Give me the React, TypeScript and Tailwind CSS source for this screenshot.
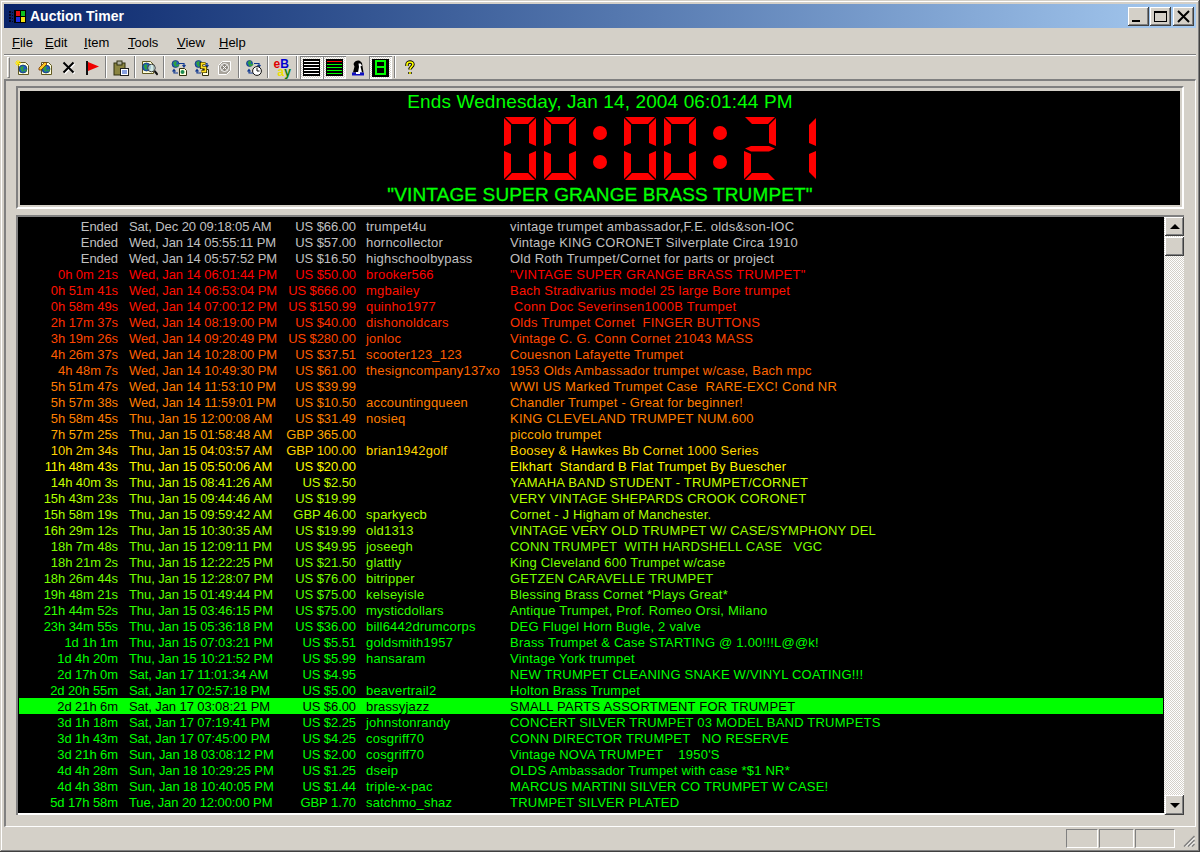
import type { ReactNode } from 'react'

const rows = [
  ['Ended', 'Sat, Dec 20 09:18:05 AM', 'US $66.00', 'trumpet4u', 'vintage trumpet ambassador,F.E. olds&son-IOC'],
  ['Ended', 'Wed, Jan 14 05:55:11 PM', 'US $57.00', 'horncollector', 'Vintage KING CORONET Silverplate Circa 1910'],
  ['Ended', 'Wed, Jan 14 05:57:52 PM', 'US $16.50', 'highschoolbypass', 'Old Roth Trumpet/Cornet for parts or project'],
  ['0h 0m 21s', 'Wed, Jan 14 06:01:44 PM', 'US $50.00', 'brooker566', '"VINTAGE SUPER GRANGE BRASS TRUMPET"'],
  ['0h 51m 41s', 'Wed, Jan 14 06:53:04 PM', 'US $666.00', 'mgbailey', 'Bach Stradivarius model 25 large Bore trumpet'],
  ['0h 58m 49s', 'Wed, Jan 14 07:00:12 PM', 'US $150.99', 'quinho1977', ' Conn Doc Severinsen1000B Trumpet'],
  ['2h 17m 37s', 'Wed, Jan 14 08:19:00 PM', 'US $40.00', 'dishonoldcars', 'Olds Trumpet Cornet  FINGER BUTTONS'],
  ['3h 19m 26s', 'Wed, Jan 14 09:20:49 PM', 'US $280.00', 'jonloc', 'Vintage C. G. Conn Cornet 21043 MASS'],
  ['4h 26m 37s', 'Wed, Jan 14 10:28:00 PM', 'US $37.51', 'scooter123_123', 'Couesnon Lafayette Trumpet'],
  ['4h 48m 7s', 'Wed, Jan 14 10:49:30 PM', 'US $61.00', 'thesigncompany137xo', '1953 Olds Ambassador trumpet w/case, Bach mpc'],
  ['5h 51m 47s', 'Wed, Jan 14 11:53:10 PM', 'US $39.99', '', 'WWI US Marked Trumpet Case  RARE-EXC! Cond NR'],
  ['5h 57m 38s', 'Wed, Jan 14 11:59:01 PM', 'US $10.50', 'accountingqueen', 'Chandler Trumpet - Great for beginner!'],
  ['5h 58m 45s', 'Thu, Jan 15 12:00:08 AM', 'US $31.49', 'nosieq', 'KING CLEVELAND TRUMPET NUM.600'],
  ['7h 57m 25s', 'Thu, Jan 15 01:58:48 AM', 'GBP 365.00', '', 'piccolo trumpet'],
  ['10h 2m 34s', 'Thu, Jan 15 04:03:57 AM', 'GBP 100.00', 'brian1942golf', 'Boosey & Hawkes Bb Cornet 1000 Series'],
  ['11h 48m 43s', 'Thu, Jan 15 05:50:06 AM', 'US $20.00', '', 'Elkhart  Standard B Flat Trumpet By Buescher'],
  ['14h 40m 3s', 'Thu, Jan 15 08:41:26 AM', 'US $2.50', '', 'YAMAHA BAND STUDENT - TRUMPET/CORNET'],
  ['15h 43m 23s', 'Thu, Jan 15 09:44:46 AM', 'US $19.99', '', 'VERY VINTAGE SHEPARDS CROOK CORONET'],
  ['15h 58m 19s', 'Thu, Jan 15 09:59:42 AM', 'GBP 46.00', 'sparkyecb', 'Cornet - J Higham of Manchester.'],
  ['16h 29m 12s', 'Thu, Jan 15 10:30:35 AM', 'US $19.99', 'old1313', 'VINTAGE VERY OLD TRUMPET W/ CASE/SYMPHONY DEL'],
  ['18h 7m 48s', 'Thu, Jan 15 12:09:11 PM', 'US $49.95', 'joseegh', 'CONN TRUMPET  WITH HARDSHELL CASE   VGC'],
  ['18h 21m 2s', 'Thu, Jan 15 12:22:25 PM', 'US $21.50', 'glattly', 'King Cleveland 600 Trumpet w/case'],
  ['18h 26m 44s', 'Thu, Jan 15 12:28:07 PM', 'US $76.00', 'bitripper', 'GETZEN CARAVELLE TRUMPET'],
  ['19h 48m 21s', 'Thu, Jan 15 01:49:44 PM', 'US $75.00', 'kelseyisle', 'Blessing Brass Cornet *Plays Great*'],
  ['21h 44m 52s', 'Thu, Jan 15 03:46:15 PM', 'US $75.00', 'mysticdollars', 'Antique Trumpet, Prof. Romeo Orsi, Milano'],
  ['23h 34m 55s', 'Thu, Jan 15 05:36:18 PM', 'US $36.00', 'bill6442drumcorps', 'DEG Flugel Horn Bugle, 2 valve'],
  ['1d 1h 1m', 'Thu, Jan 15 07:03:21 PM', 'US $5.51', 'goldsmith1957', 'Brass Trumpet & Case STARTING @ 1.00!!!L@@k!'],
  ['1d 4h 20m', 'Thu, Jan 15 10:21:52 PM', 'US $5.99', 'hansaram', 'Vintage York trumpet'],
  ['2d 17h 0m', 'Sat, Jan 17 11:01:34 AM', 'US $4.95', '', 'NEW TRUMPET CLEANING SNAKE W/VINYL COATING!!!'],
  ['2d 20h 55m', 'Sat, Jan 17 02:57:18 PM', 'US $5.00', 'beavertrail2', 'Holton Brass Trumpet'],
  ['2d 21h 6m', 'Sat, Jan 17 03:08:21 PM', 'US $6.00', 'brassyjazz', 'SMALL PARTS ASSORTMENT FOR TRUMPET'],
  ['3d 1h 18m', 'Sat, Jan 17 07:19:41 PM', 'US $2.25', 'johnstonrandy', 'CONCERT SILVER TRUMPET 03 MODEL BAND TRUMPETS'],
  ['3d 1h 43m', 'Sat, Jan 17 07:45:00 PM', 'US $4.25', 'cosgriff70', 'CONN DIRECTOR TRUMPET   NO RESERVE'],
  ['3d 21h 6m', 'Sun, Jan 18 03:08:12 PM', 'US $2.00', 'cosgriff70', "Vintage NOVA TRUMPET    1950'S"],
  ['4d 4h 28m', 'Sun, Jan 18 10:29:25 PM', 'US $1.25', 'dseip', 'OLDS Ambassador Trumpet with case *$1 NR*'],
  ['4d 4h 38m', 'Sun, Jan 18 10:40:05 PM', 'US $1.44', 'triple-x-pac', 'MARCUS MARTINI SILVER CO TRUMPET W CASE!'],
  ['5d 17h 58m', 'Tue, Jan 20 12:00:00 PM', 'GBP 1.70', 'satchmo_shaz', 'TRUMPET SILVER PLATED'],
]

// red -> yellow -> green over the last 24 hours
function rowColor(left: string) {
  if (left === 'Ended') return '#c0c0c0'
  const d = left.match(/(\d+)d/)
  const h = left.match(/(\d+)h/)
  const m = left.match(/(\d+)m/)
  const hours = (d ? +d[1] * 24 : 0) + (h ? +h[1] : 0) + (m ? +m[1] / 60 : 0)
  if (hours >= 24) return '#00ff00'
  if (hours < 12) return `rgb(255,${Math.round((hours / 12) * 255)},0)`
  return `rgb(${Math.round(((24 - hours) / 12) * 255)},255,0)`
}

const raised =
  'bg-[#d4d0c8] shadow-[inset_-1px_-1px_#404040,inset_1px_1px_#ffffff,inset_-2px_-2px_#808080,inset_2px_2px_#d4d0c8]'
const dither =
  'bg-[repeating-conic-gradient(#d4d0c8_0_25%,#ffffff_0_50%)] bg-[length:2px_2px]'

function Icon({ children }: { children: ReactNode }) {
  return (
    <svg width="16" height="16" viewBox="0 0 16 16" className="block">
      {children}
    </svg>
  )
}

function Page() {
  return <path d="M3.5 2.5h7l3 3v9h-10z" fill="#ffffdd" stroke="#605820" />
}

function Globe({ x = 8, y = 9, r = 4 }: { x?: number; y?: number; r?: number }) {
  return (
    <g>
      <circle cx={x} cy={y} r={r} fill="#1c5cc0" stroke="#103068" strokeWidth="0.7" />
      <path
        d={`M${x - r + 1} ${y - 1}l2 -2 2 1 -1 2 1 2 -2 1z M${x + 1} ${y + 1}l2 -1 1 1 -2 2z`}
        fill="#30a040"
      />
    </g>
  )
}

function NewIcon() {
  return (
    <Icon>
      <Page />
      <Globe />
      <path d="M3 0v6M0 3h6M1 1l4 4M5 1l-4 4" stroke="#ffe800" strokeWidth="1" />
    </Icon>
  )
}

function EditIcon() {
  return (
    <Icon>
      <Page />
      <Globe />
      <path d="M1 8l6-6 2 2-6 6H1z" fill="#f8c820" stroke="#7a3000" strokeWidth="0.8" />
    </Icon>
  )
}

function DeleteIcon() {
  return (
    <Icon>
      <path d="M3.5 3.5l10 10M13.5 3.5l-10 10" stroke="#ffffff" strokeWidth="2" />
      <path d="M2.5 2.5l10 10M12.5 2.5l-10 10" stroke="#000000" strokeWidth="2" />
    </Icon>
  )
}

function FlagIcon() {
  return (
    <Icon>
      <rect x="2" y="1" width="2" height="14" fill="#101010" />
      <path d="M4 2l11 4.500-11 4.500z" fill="#f00000" />
    </Icon>
  )
}

function ClipboardIcon() {
  return (
    <Icon>
      <rect x="1" y="3" width="11" height="12" fill="#8a8440" stroke="#303010" />
      <rect x="4" y="1" width="5" height="4" fill="#b0b0a0" stroke="#303010" />
      <rect x="7.5" y="8.5" width="8" height="7" fill="#ffffff" stroke="#202020" />
      <path d="M9 11h5M9 13h5" stroke="#1040c0" />
    </Icon>
  )
}

function FindIcon() {
  return (
    <Icon>
      <path d="M0.500 1.500h8l3 3v9h-11z" fill="#ffffdd" stroke="#605820" />
      <Globe x={4.500} y={7} />
      <circle cx="9.500" cy="8" r="3.800" fill="#c0e0e8" fillOpacity="0.75" stroke="#404040" />
      <path d="M12.500 11l3.200 3.800" stroke="#101010" strokeWidth="2" />
    </Icon>
  )
}

function Arrows() {
  return (
    <path
      d="M8 3.5h5v3M11.5 5l1.5 2 1.5-2M7 13H3v-3M1.5 11.5L3 9.5l1.5 2"
      fill="none"
      stroke="#103890"
      strokeWidth="1.2"
    />
  )
}

function RefreshIcon() {
  return (
    <Icon>
      <Globe x={4.5} y={4} r={3.5} />
      <Arrows />
      <path d="M8.5 8.5h5l2 2v5h-7z" fill="#ffffdd" stroke="#303010" />
      <circle cx="11.5" cy="12" r="2" fill="#1c8c50" />
    </Icon>
  )
}

function RefreshAllIcon() {
  return (
    <Icon>
      <Globe x={4.5} y={4} r={3.5} />
      <Arrows />
      <path d="M8.5 9.5h6v6h-6z" fill="#ffffdd" stroke="#303010" />
      <path d="M11.5 3.5H7.5v4h4v4h-4" fill="none" stroke="#000000" strokeWidth="3.2" />
      <path d="M11.5 3.5H7.5v4h4v4h-4" fill="none" stroke="#ffe020" strokeWidth="1.8" />
    </Icon>
  )
}

function StopIcon() {
  return (
    <Icon>
      <path d="M1.500 5.500l4-4h8v9l-4 4h-8z" fill="#a8a49c" stroke="#ffffff" />
      <circle cx="7.500" cy="7.500" r="4" fill="#8c8880" stroke="#ffffff" />
      <path d="M5.500 5.500l4 4M9.500 5.500l-4 4" stroke="#ffffff" />
    </Icon>
  )
}

function ClockIcon() {
  return (
    <Icon>
      <Globe x={3.5} y={3.5} r={3} />
      <Arrows />
      <circle cx="11" cy="11" r="4.4" fill="#ffffff" stroke="#101010" />
      <path d="M11 8v3h2.5" fill="none" stroke="#101010" />
    </Icon>
  )
}

function EbayIcon() {
  return (
    <div className="h-[16px] w-[20px] text-[12px] font-bold leading-[8px]">
      <div className="h-[8px] pl-[1px]">
        <span className="text-[#e00000]">e</span>
        <span className="text-[#0000d0]">B</span>
      </div>
      <div className="h-[8px] pl-[5px]">
        <span className="text-[#f0e000]">a</span>
        <span className="text-[#108000]">y</span>
      </div>
    </div>
  )
}

function LinesIcon({ colored }: { colored?: boolean }) {
  const ys = [3, 6, 9, 12, 15]
  return (
    <svg width="17" height="17" viewBox="0 0 17 17" className="block [shape-rendering:crispEdges]">
      <rect width="17" height="17" fill="#000000" />
      {ys.map((y, i) => (
        <rect
          key={y}
          x="1"
          y={y - 1}
          width="15"
          height="1"
          fill={colored ? (i === 0 ? '#ff0000' : '#00ff00') : '#ffffff'}
        />
      ))}
    </svg>
  )
}

function SniperIcon() {
  return (
    <svg width="14" height="16" viewBox="0 0 14 16" className="block">
      <path d="M2 12.500l1.500-6-1-2.500C4 .500 7 0 9 1l2 2 1.500 9.500z" fill="#000000" />
      <path d="M7.500 3.500h2l1.500 2-1.500 1 1.500 6H7L8 7z" fill="#ffffff" />
      <rect x="1" y="12.500" width="12" height="3" fill="#1010c0" />
      <rect x="5" y="12" width="4" height="2" fill="#ffffff" />
    </svg>
  )
}

function LedIcon() {
  return (
    <div className="flex h-[18px] w-[17px] items-center justify-center bg-black">
      <svg width="11" height="15" viewBox="0 0 11 15" className="block [shape-rendering:crispEdges]">
        <path d="M1 1h9v6H1zM1 7h9v7H1z" fill="none" stroke="#00ff00" strokeWidth="2" />
      </svg>
    </div>
  )
}

function HelpIcon() {
  return (
    <Icon>
      <path
        d="M5 6V4.500C5 3 6.500 2 8 2s3 1 3 2.500c0 2-3 2.500-3 5M8 12v2"
        fill="none"
        stroke="#000000"
        strokeWidth="3.400"
      />
      <path
        d="M5 6V4.500C5 3 6.500 2 8 2s3 1 3 2.500c0 2-3 2.500-3 5M8 12v2"
        fill="none"
        stroke="#ffff00"
        strokeWidth="1.600"
      />
    </Icon>
  )
}

function ToolButton({ children, pressed }: { children: ReactNode; pressed?: boolean }) {
  return (
    <div
      className={
        pressed
          ? `flex h-[23px] w-[23px] items-center justify-center ${dither} shadow-[inset_1px_1px_#808080,inset_-1px_-1px_#ffffff]`
          : 'flex h-[23px] w-[23px] items-center justify-center'
      }
    >
      {children}
    </div>
  )
}

function ToolSep() {
  return (
    <div className="flex h-[23px] w-[6px] justify-center">
      <div className="h-[22px] w-[2px] border-l border-r border-l-[#808080] border-r-white" />
    </div>
  )
}

function Toolbar() {
  return (
    <div className="flex h-[23px] items-center pl-[3px]">
      <div className="mr-[1px] h-[21px] w-[3px] border border-t-white border-l-white border-r-[#808080] border-b-[#808080]" />
      <ToolButton><NewIcon /></ToolButton>
      <ToolButton><EditIcon /></ToolButton>
      <ToolButton><DeleteIcon /></ToolButton>
      <ToolButton><FlagIcon /></ToolButton>
      <ToolSep />
      <ToolButton><ClipboardIcon /></ToolButton>
      <ToolSep />
      <ToolButton><FindIcon /></ToolButton>
      <ToolSep />
      <ToolButton><RefreshIcon /></ToolButton>
      <ToolButton><RefreshAllIcon /></ToolButton>
      <ToolButton><StopIcon /></ToolButton>
      <ToolSep />
      <ToolButton><ClockIcon /></ToolButton>
      <ToolSep />
      <ToolButton><EbayIcon /></ToolButton>
      <ToolSep />
      <ToolButton pressed><LinesIcon /></ToolButton>
      <ToolButton pressed><LinesIcon colored /></ToolButton>
      <ToolButton><SniperIcon /></ToolButton>
      <ToolButton pressed><LedIcon /></ToolButton>
      <ToolSep />
      <ToolButton><HelpIcon /></ToolButton>
    </div>
  )
}

function WindowsLogo() {
  return (
    <svg width="18" height="15" viewBox="0 0 18 15" className="block [shape-rendering:crispEdges]">
      <path d="M0 2h2v2H0zM0 5h2v2H0zM0 8h2v2H0zM0 11h2v2H0zM3 3h1v1H3zM3 6h1v1H3zM3 9h1v1H3zM3 12h1v1H3z" fill="#050520" />
      <path d="M5 1h12v13H5z" fill="#000000" />
      <rect x="7" y="2" width="4" height="5" fill="#e01010" />
      <rect x="12" y="2" width="4" height="5" fill="#10c020" />
      <rect x="7" y="8" width="4" height="5" fill="#2030e0" />
      <rect x="12" y="8" width="4" height="5" fill="#f0e010" />
    </svg>
  )
}

function CaptionButton({ children, className }: { children: ReactNode; className?: string }) {
  return (
    <div className={`flex h-[19px] w-[21px] items-center justify-center ${raised} ${className ?? ''}`}>
      {children}
    </div>
  )
}

function TitleBar() {
  return (
    <div className="flex h-[24px] items-center bg-gradient-to-r from-[#0a246a] to-[#a6caf0] pl-[5px] pr-[2px]">
      <WindowsLogo />
      <span className="ml-[3px] text-[14px] font-bold leading-none text-white">Auction Timer</span>
      <div className="ml-auto flex items-center">
        <CaptionButton>
          <svg width="21" height="19" viewBox="0 0 21 19" className="[shape-rendering:crispEdges]">
            <rect x="4" y="13" width="8" height="2" fill="#000000" />
          </svg>
        </CaptionButton>
        <CaptionButton className="ml-[1px]">
          <svg width="21" height="19" viewBox="0 0 21 19" className="[shape-rendering:crispEdges]">
            <path d="M4.500 4.500h12v10h-12z" fill="none" stroke="#000000" />
            <rect x="4" y="4" width="13" height="2" fill="#000000" />
          </svg>
        </CaptionButton>
        <CaptionButton className="ml-[2px]">
          <svg width="21" height="19" viewBox="0 0 21 19">
            <path d="M5 4l11 11M16 4L5 15" stroke="#000000" strokeWidth="2" />
          </svg>
        </CaptionButton>
      </div>
    </div>
  )
}

function MenuBar() {
  const items = [
    ['F', 'ile', 'w-[33px]'],
    ['E', 'dit', 'w-[39px]'],
    ['I', 'tem', 'w-[44px]'],
    ['T', 'ools', 'w-[49px]'],
    ['V', 'iew', 'w-[42px]'],
    ['H', 'elp', 'w-[40px]'],
  ]
  return (
    <div className="mt-[1px] flex h-[25px] items-center pl-[8px] pt-[1px] text-[13px] leading-none text-black">
      {items.map(([u, rest, width]) => (
        <span key={u} className={width}>
          <span className="underline">{u}</span>
          {rest}
        </span>
      ))}
    </div>
  )
}

const segments: Record<string, string> = {
  a: '1,0 31,0 24,7 8,7',
  f: '0,1 7,8 7,26 0,29',
  b: '32,1 25,8 25,26 32,29',
  g: '1,31.500 7,29 25,29 31,31.500 25,34.500 7,34.500',
  e: '0,34 7,37 7,55 0,62',
  c: '32,34 25,37 25,55 32,62',
  d: '1,63 31,63 24,56 8,56',
}

const digitSegments: Record<string, string> = {
  '0': 'abcdef',
  '1': 'bc',
  '2': 'abged',
}

function LedClock({ value }: { value: string }) {
  let x = 0
  return (
    <svg width="312" height="63" viewBox="0 0 312 63" className="block">
      {value.split('').map((ch, i) => {
        if (ch === ':') {
          const cx = x + 16
          x += 40
          return (
            <g key={i} fill="#ff0000">
              <circle cx={cx} cy="16" r="7" />
              <circle cx={cx} cy="45" r="7" />
            </g>
          )
        }
        const left = x
        x += 40
        return (
          <g key={i} transform={`translate(${left} 0)`} fill="#ff0000">
            {digitSegments[ch].split('').map(s => (
              <polygon key={s} points={segments[s]} />
            ))}
          </g>
        )
      })}
    </svg>
  )
}

function TimerPanel() {
  return (
    <div className="h-[123px] border-2 border-t-[#808080] border-l-[#808080] border-r-white border-b-white pb-[2px] pl-[2px] pr-[2px] pt-[3px]">
      <div className="flex h-[114px] flex-col items-center bg-black text-[19px] leading-none text-[#00ff00]">
        <div className="mt-[2px] h-[24px] leading-[18px] tracking-[0.12px]">Ends Wednesday, Jan 14, 2004 06:01:44 PM</div>
        <div className="ml-[120px]">
          <LedClock value="00:00:21" />
        </div>
        <div className="mt-[6px] leading-[18px] tracking-[0.14px] [-webkit-text-stroke:0.3px_#00ff00]">
          "VINTAGE SUPER GRANGE BRASS TRUMPET"
        </div>
      </div>
    </div>
  )
}

function ScrollBar() {
  return (
    <div className={`flex w-[20px] flex-col pl-[1px] ${dither}`}>
      <div className={`flex h-[19px] w-[19px] items-center justify-center ${raised}`}>
        <div className="h-0 w-0 border-x-[5px] border-b-[5px] border-x-transparent border-b-black" />
      </div>
      <div className={`mt-[1px] h-[19px] w-[19px] ${raised}`} />
      <div className="flex-1" />
      <div className={`flex h-[20px] w-[19px] items-center justify-center ${raised}`}>
        <div className="h-0 w-0 border-x-[5px] border-t-[5px] border-x-transparent border-t-black" />
      </div>
    </div>
  )
}

function AuctionList() {
  return (
    <div className="mt-[6px] flex h-[600px] border-l-2 border-t-2 border-l-[#808080] border-t-[#808080]">
      <div className="flex-1 border-b-2 border-white bg-black px-[1px] pt-[1px] text-[13px] leading-[18px]">
        {rows.map(([left, ends, price, seller, title]) => {
          const selected = seller === 'brassyjazz'
          return (
            <div
              key={ends}
              className={selected ? 'flex h-[16px] whitespace-pre bg-[#00ff00]' : 'flex h-[16px] whitespace-pre'}
              style={{ color: selected ? '#000000' : rowColor(left) }}
            >
              <div className="w-[99px] text-right tracking-[-0.08px]">{left}</div>
              <div className="ml-[11px] w-[140px] tracking-[-0.09px]">{ends}</div>
              <div className="w-[87px] text-right tracking-[-0.08px]">{price}</div>
              <div className="ml-[10px] w-[144px] tracking-[0.2px]">{seller}</div>
              <div className="flex-1 tracking-[0.22px]">{title}</div>
            </div>
          )
        })}
      </div>
      <ScrollBar />
    </div>
  )
}

function StatusBar() {
  const pane = 'h-[19px] border border-t-[#808080] border-l-[#808080] border-r-white border-b-white'
  return (
    <div className="flex h-[21px] items-start justify-end pt-[2px]">
      <div className={`${pane} w-[32px]`} />
      <div className={`${pane} ml-[1px] w-[35px]`} />
      <div className={`${pane} ml-[1px] w-[40px]`} />
      <div className="ml-[8px] mr-[1px] mt-[6px] h-[12px] w-[12px]">
        <svg width="12" height="12" viewBox="0 0 12 12">
          <path d="M11.500 1L1 11.500M11.500 5L5 11.500M11.500 9L9 11.500" stroke="#808080" strokeWidth="1.500" />
          <path d="M11.500 3L3 11.500M11.500 7L7 11.500" stroke="#ffffff" />
        </svg>
      </div>
    </div>
  )
}

export default function App() {
  return (
    <div className="flex h-[852px] w-[1200px] flex-col bg-[#d4d0c8] p-[4px] font-[Liberation_Sans,Arial,sans-serif] shadow-[inset_-1px_-1px_#404040,inset_1px_1px_#d4d0c8,inset_-2px_-2px_#808080,inset_2px_2px_#ffffff]">
      <TitleBar />
      <MenuBar />
      <div className="border-t border-t-[#808080]" />
      <div className="h-[24px] border-t border-t-white">
        <Toolbar />
      </div>
      <div className="h-[748px] border-t-2 border-l-2 border-r border-b border-t-[#808080] border-l-[#808080] border-b-white border-r-white pl-[10px] pr-[11px] pt-[5px]">
        <TimerPanel />
        <AuctionList />
      </div>
      <StatusBar />
    </div>
  )
}
